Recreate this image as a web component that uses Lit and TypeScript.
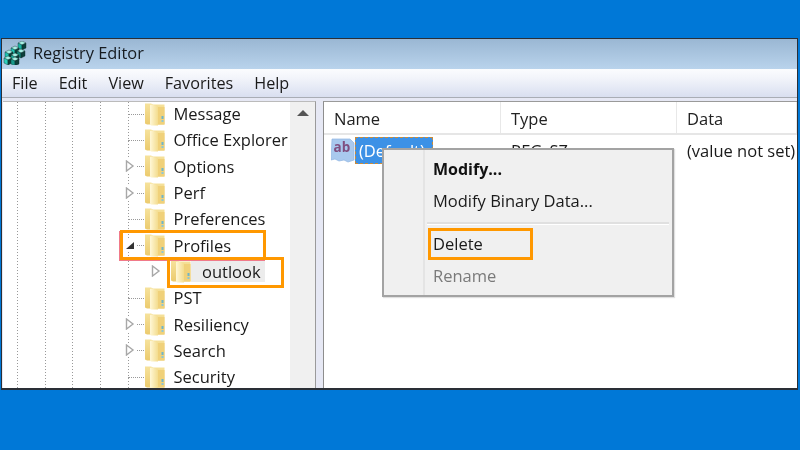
import { LitElement, html, css, svg } from "lit";
import { customElement } from "lit/decorators.js";

const folder = html`<svg class="folder" viewBox="0 0 20 24" width="20" height="24">
  <defs><linearGradient id="fg" x1="0" x2="1" y1="0" y2="0"><stop offset="0" stop-color="#fff7d6"/><stop offset="1" stop-color="#f3dc8e"/></linearGradient>
  <linearGradient id="fb" x1="0" x2="0" y1="0" y2="1"><stop offset="0" stop-color="#f6e29c"/><stop offset="1" stop-color="#eccb6e"/></linearGradient></defs>
  <path d="M0 1.5h6l2 1h11.5v20H2l-2-1z" fill="url(#fb)"/>
  <path d="M6 2.5l6 1.5 1 1v18.5H6l-1-1V3z" fill="url(#fg)"/>
  <path d="M13 5h6.5v17.5H13z" fill="#f0d17a"/>
  <rect x="16.5" y="14" width="2" height="3" fill="#6fb5c9"/>
  <rect x="16.5" y="18" width="2" height="2" fill="#8cc6d6"/>
</svg>`;

type Row = { label: string; exp?: "open" | "closed" };
const rows: Row[] = [
  { label: "Message" },
  { label: "Office Explorer" },
  { label: "Options", exp: "closed" },
  { label: "Perf", exp: "closed" },
  { label: "Preferences" },
  { label: "Profiles", exp: "open" },
  { label: "outlook" },
  { label: "PST" },
  { label: "Resiliency", exp: "closed" },
  { label: "Search", exp: "closed" },
  { label: "Security" },
];

const tri = (open: boolean) =>
  open
    ? html`<svg class="tri" viewBox="0 0 10 10" width="10" height="10"><path d="M1 9L9 2v7z" fill="#333"/></svg>`
    : html`<svg class="tri" viewBox="0 0 10 12" width="10" height="12"><path d="M1.5 1l6.5 5-6.5 5z" fill="#fff" stroke="#a8a8a8" stroke-width="1.4"/></svg>`;

@customElement("app-root")
export class AppRoot extends LitElement {
  static styles = css`
    :host { display: flex; flex-direction: column; width: 800px; height: 450px; background: #0078d7; position: relative; overflow: hidden;
      font-family: "Open Sans", "Noto Sans", sans-serif; color: #222; }
    .band-top { height: 38px; flex: none; }
    .band-bottom { height: 60px; flex: none; }
    .window { flex: none; height: 352px; margin: 0 2px 0 1px; display: flex; flex-direction: column; border: 1.5px solid #2a2f36; border-bottom-width: 2px; box-sizing: border-box;
      background: #e4e8f5; filter: blur(.45px); position: relative; }
    .title { height: 30px; flex: none; display: flex; align-items: center; gap: 6px; padding-left: 1px; padding-bottom: 3px; box-sizing: border-box; font-size: 16.4px;
      background: linear-gradient(#9ab7d3, #b9d3ec); color: #171c21; }
    .menubar { height: 28px; flex: none; display: flex; align-items: center; font-size: 16.2px; background: linear-gradient(#fbfcfe, #f3f5fb 30%, #d9dff0); padding-left: 10px; gap: 21px; color: #1a1a1a; }
    .panes { flex: 1; min-height: 0; display: flex; gap: 7px; background: #e6e8f4; padding-top: 3px; border-top: 1px solid #a9adb5; }
    .tree-pane { width: 313px; flex: none; display: flex; background: #fff; margin-left: 1px; overflow: hidden; border-right: 1px solid #9a9a9a; border-top: 1px solid #bbb; box-sizing: border-box; }
    .tree { flex: 1; min-width: 0; overflow: hidden; background-repeat: no-repeat;
      background-image:
        repeating-linear-gradient(#999 0 1px, transparent 1px 3px),
        repeating-linear-gradient(#999 0 1px, transparent 1px 3px),
        repeating-linear-gradient(#999 0 1px, transparent 1px 3px),
        repeating-linear-gradient(#999 0 1px, transparent 1px 3px),
        repeating-linear-gradient(#999 0 1px, transparent 1px 3px);
      background-size: 1px 100%;
      background-position: 14px 0, 42px 0, 69px 0, 97px 0, 125px 0; }
    .row { height: 26.3px; display: flex; align-items: center; position: relative; font-size: 16.5px; color: #1a1a1a; white-space: nowrap; top: -1.5px; }
    .lead { width: 170.5px; flex: none; display: flex; align-items: center; position: relative; height: 100%; padding-left: 141.5px; box-sizing: border-box; }
    .dash { position: absolute; left: 125px; width: 16px; top: 50%; border-top: 1px dotted #999; }
    .exp { position: absolute; left: 121px; top: 50%; transform: translateY(-50%); background: #fff; display: flex; padding: 1px 2px 1px 1px; }
    .folder { flex: none; display: block; }
    .sub .lead { width: 188px; padding-left: 168px; }
    .sub .dash { display: none; }
    .sub .exp { left: 147px; }
    .sub .label { background: #ececec; padding: 0 4px 0 11px; line-height: 21px; }
    .scroll { width: 25px; flex: none; background: #f0f0f0; display: flex; justify-content: center; padding-top: 8px; box-sizing: border-box; }
    .list-pane { flex: 1; min-width: 0; background: #fff; border-left: 1px solid #8d8d8d; border-top: 1px solid #9a9a9a; display: flex; flex-direction: column; font-size: 16.5px; }
    .header { height: 33px; flex: none; display: grid; grid-template-columns: 177px 176px 1fr; border-bottom: 2px solid #e6e6e6; box-sizing: border-box; align-items: center; color: #222; }
    .header span { padding-left: 10px; height: 100%; display: flex; align-items: center; border-right: 1px solid #e8e8e8; box-sizing: border-box; padding-top: 1px; }
    .value { display: grid; grid-template-columns: 177px 176px 1fr; height: 30px; align-items: center; color: #1a1a1a; }
    .value > span { padding-left: 10px; white-space: nowrap; overflow: hidden; }
    .namecell { display: flex; align-items: center; padding-left: 7px; }
    .sel { background: #3c91e6; color: #fff; outline: 1px dashed #c98b3a; outline-offset: -1px; height: 27px; width: 78px; padding-left: 4px; box-sizing: border-box; display: flex; align-items: center; }
    .ctx { position: absolute; left: 382px; top: 148px; width: 292px; height: 149px; box-sizing: border-box; background: #f0f0f0; border: 2px solid #a3a3a3; display: grid; grid-template-columns: 41px 1fr; font-size: 16.5px; box-shadow: 1px 1px 1px rgba(0,0,0,.12); filter: blur(.4px); }
    .gutter { border-right: 2px solid #e4e4e4; }
    .items { display: flex; flex-direction: column; padding-top: 2.5px; margin-left: 2px; }
    .item { height: 32px; padding-left: 6px; display: flex; align-items: center; color: #1a1a1a; flex: none; }
    .item.b { font-weight: 700; color: #111; font-size: 16px; }
    .item.dis { color: #7a7a7a; }
    .sep { height: 2px; background: #e0e0e0; border-bottom: 1px solid #fff; margin: 5px 3px 3px 0; flex: none; }
    .mark { position: absolute; border: 3.5px solid #ff9800; box-sizing: border-box; pointer-events: none; z-index: 5; }
    .m1 { left: 119.5px; top: 229.5px; width: 146.5px; height: 30.5px; box-shadow: -1px 1px 0 #f07a8a; }
    .m2 { left: 167px; top: 257px; width: 117px; height: 30.5px; }
    .m3 { left: 428px; top: 228px; width: 105px; height: 32px; }
  `;

  private logo() {
    const cube = (x: number, y: number, c: string) => svg`
      <path d="M${x} ${y+2}l4-2 4 2-4 2z" fill="#a8f0e4"/>
      <path d="M${x} ${y+2}l4 2v5l-4-2z" fill="${c}"/>
      <path d="M${x+8} ${y+2}l-4 2v5l4-2z" fill="#0c3f3a"/>`;
    return html`<svg viewBox="0 0 24 24" width="24" height="24">
      <g stroke="#0d2a28" stroke-width=".4">
      ${cube(15, 0, "#19b3a2")}${cube(8, 5, "#1fc4b2")}${cube(2, 9, "#1fc4b2")}
      ${cube(14, 8, "#128a7c")}${cube(8, 12, "#1ab5a4")}${cube(1, 15, "#2fd0bd")}${cube(8, 16, "#179a8b")}
      </g></svg>`;
  }

  private abIcon() {
    return html`<svg viewBox="0 0 24 26" width="24" height="26">
      <path d="M1 2h18l4 4v17l-6 2-4-2-5 1-4-2-4 1z" fill="#a9c9ee" stroke="#8fb4e2" stroke-width=".7"/>
      <text x="2.5" y="15" font-family="Open Sans, sans-serif" font-size="13.5" font-weight="700" fill="#7f4f80">ab</text>
    </svg>`;
  }

  render() {
    return html`
      <div class="band-top"></div>
      <div class="window">
        <div class="title">${this.logo()}<span>Registry Editor</span></div>
        <div class="menubar"><span>File</span><span>Edit</span><span>View</span><span>Favorites</span><span>Help</span></div>
        <div class="panes">
          <div class="tree-pane">
            <div class="tree">
              ${rows.map((r) => {
                const sub = r.label === "outlook";
                return html`<div class="row ${sub ? "sub" : ""}">
                  <div class="lead">
                    <span class="dash"></span>
                    ${sub ? html`<span class="exp">${tri(false)}</span>` : r.exp ? html`<span class="exp">${tri(r.exp === "open")}</span>` : ""}
                    ${folder}
                  </div>
                  <span class="label">${r.label}</span>
                </div>`;
              })}
            </div>
            <div class="scroll"><svg viewBox="0 0 12 6" width="12" height="6"><path d="M0 6l6-6 6 6z" fill="#555"/></svg></div>
          </div>
          <div class="list-pane">
            <div class="header"><span>Name</span><span>Type</span><span>Data</span></div>
            <div class="value">
              <div class="namecell">${this.abIcon()}<div class="sel">(Default)</div></div>
              <span>REG_SZ</span>
              <span>(value not set)</span>
            </div>
          </div>
        </div>
      </div>
      <div class="band-bottom"></div>
      <div class="ctx">
        <div class="gutter"></div>
        <div class="items">
          <div class="item b">Modify...</div>
          <div class="item">Modify Binary Data...</div>
          <div class="sep"></div>
          <div class="item">Delete</div>
          <div class="item dis">Rename</div>
        </div>
      </div>
      <div class="mark m1"></div>
      <div class="mark m2"></div>
      <div class="mark m3"></div>
    `;
  }
}
